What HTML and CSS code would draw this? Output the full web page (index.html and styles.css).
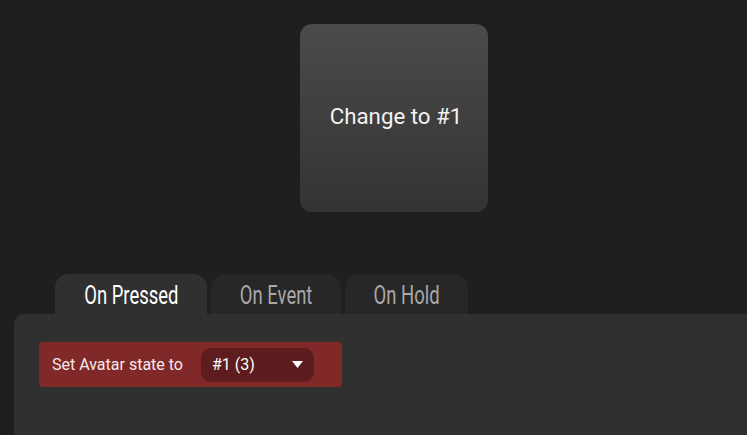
FILE: index.html
```html
<!DOCTYPE html>
<html>
<head>
<meta charset="utf-8">
<link rel="stylesheet" href="styles.css">
</head>
<body>
<div class="stage">
  <div class="action-button">Change to #1</div>
</div>
<div class="tabs">
  <div class="tab tab-active tab-pressed"><span class="tab-label">On Pressed</span></div>
  <div class="tab tab-event"><span class="tab-label">On Event</span></div>
  <div class="tab tab-hold"><span class="tab-label">On Hold</span></div>
</div>
<div class="panel">
  <div class="action-row">
    <span class="action-text">Set Avatar state to</span>
    <div class="select">
      <span class="select-value">#1 (3)</span>
      <svg class="select-caret" width="11" height="7" viewBox="0 0 11 7"><polygon points="0,0 11,0 5.5,7" fill="#ffffff"/></svg>
    </div>
  </div>
</div>
</body>
</html>
```
FILE: styles.css
```css
html, body {
  margin: 0;
  padding: 0;
  background: #1f1f1f;
  font-family: Roboto, "Noto Sans", sans-serif;
  height: 100%;
  overflow: hidden;
}
body {
  display: flex;
  flex-direction: column;
}
.stage {
  padding-top: 24px;
  padding-left: 300px;
}
.action-button {
  width: 188px;
  height: 188px;
  box-sizing: border-box;
  padding-bottom: 5px;
  padding-left: 4px;
  border-radius: 12px;
  background: linear-gradient(#4b4b4b, #333333);
  color: #f2f2f2;
  font-size: 22.3px;
  display: flex;
  align-items: center;
  justify-content: center;
}
.tabs {
  display: flex;
  gap: 4px;
  margin-top: 62px;
  margin-left: 55px;
}
.tab {
  height: 40px;
  border-radius: 14px 14px 0 0;
  background: #272727;
  display: flex;
  align-items: center;
  justify-content: center;
  color: #a9a9a9;
}
.tab-pressed { width: 152px; }
.tab-event { width: 130px; }
.tab-hold { width: 123px; }
.tab-active {
  background: #303030;
  color: #ffffff;
}
.tab-label {
  display: inline-block;
  font-size: 26px;
  font-weight: 400;
  transform: scaleX(0.71);
  white-space: nowrap;
  margin-top: 2px;
}
.panel {
  flex: 1;
  margin-left: 14px;
  background: #303030;
  border-top-left-radius: 10px;
  padding: 28px 25px;
}
.action-row {
  width: 303px;
  height: 45px;
  box-sizing: border-box;
  background: #812828;
  border-radius: 4px;
  display: flex;
  align-items: center;
  padding-left: 13px;
  color: #f4eaea;
  font-size: 16px;
}
.select {
  margin-left: 18px;
  width: 113px;
  height: 34px;
  box-sizing: border-box;
  border-radius: 10px;
  background: #5d1c1d;
  display: flex;
  align-items: center;
  justify-content: space-between;
  padding: 0 11px 0 11px;
  color: #ffffff;
}
.select-caret {
  display: block;
}
```
